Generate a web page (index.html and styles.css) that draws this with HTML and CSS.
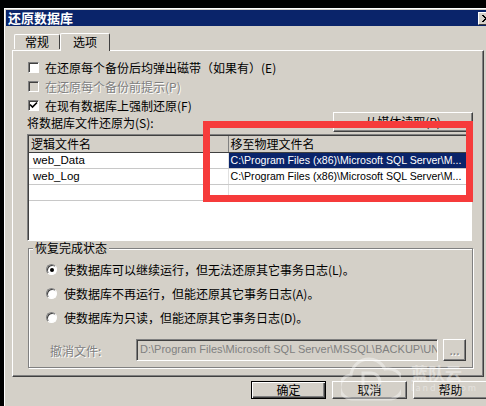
FILE: index.html
```html
<!DOCTYPE html>
<html lang="zh-CN">
<head>
  <meta charset="UTF-8" />
  <title>还原数据库</title>
  <link rel="stylesheet" href="styles.css">
</head>
<body>

<div class="window">
  <!-- title bar -->
  <div class="titlebar">
    <span class="title">还原数据库</span>
    <span class="close">
      <svg width="8" height="7" viewBox="0 0 8 7"><path d="M0 0L7 7M7 0L0 7M1 0L8 7M8 0L1 7" stroke="#000" stroke-width="1"/></svg>
    </span>
  </div>

  <!-- tabs -->
  <div class="tabs">
    <div class="tab">常规</div>
    <div class="tab active">选项</div>
  </div>

  <div class="panel">
    <div class="check"><span class="box"></span>在还原每个备份后均弹出磁带（如果有）(E)</div>
    <div class="check disabled"><span class="box"></span>在还原每个备份前提示(P)</div>
    <div class="check">
      <span class="box"><svg width="9" height="9" viewBox="0 0 9 9"><path d="M1 3.5L3.5 6L8 1.5" fill="none" stroke="#000" stroke-width="1.6"/></svg></span>在现有数据库上强制还原(F)
    </div>

    <div class="files-row">
      <span>将数据库文件还原为(S):</span>
      <button class="btn media">从媒体读取(R)</button>
    </div>

    <div class="grid">
      <table>
        <tr class="head"><th class="c1">逻辑文件名</th><th>移至物理文件名</th></tr>
        <tr><td class="c1">web_Data</td><td class="sel">C:\Program Files (x86)\Microsoft SQL Server\M...</td></tr>
        <tr><td class="c1">web_Log</td><td>C:\Program Files (x86)\Microsoft SQL Server\M...</td></tr>
        <tr><td class="c1">&nbsp;</td><td>&nbsp;</td></tr>
        <tr class="rest"><td class="c1"></td><td></td></tr>
      </table>
    </div>

    <div class="group">
      <span class="legend">恢复完成状态</span>
      <div class="radio"><span class="dot on"></span>使数据库可以继续运行，但无法还原其它事务日志(L)。</div>
      <div class="radio"><span class="dot"></span>使数据库不再运行，但能还原其它事务日志(A)。</div>
      <div class="radio"><span class="dot"></span>使数据库为只读，但能还原其它事务日志(D)。</div>
      <div class="undo-row">
        <span class="undo-label">撤消文件:</span>
        <div class="field">D:\Program Files\Microsoft SQL Server\MSSQL\BACKUP\UN</div>
        <button class="btn dots">...</button>
      </div>
    </div>
  </div>

  <div class="actions">
    <button class="btn default">确定</button>
    <button class="btn">取消</button>
    <button class="btn">帮助</button>
  </div>

  <!-- red highlight drawn on top of the screenshot -->
  <div class="highlight"></div>

  <!-- watermark -->
  <div class="watermark">
    <svg width="60" height="46" viewBox="0 0 60 46">
      <path d="M12 44 A12 12 0 0 1 10 20 A18 18 0 0 1 44 14 A14 14 0 0 1 50 44 Z" fill="none" stroke="rgba(255,255,255,0.4)" stroke-width="3"/>
      <path d="M22 18 V36 H30 A9 9 0 0 0 30 18 Z" fill="none" stroke="rgba(255,255,255,0.4)" stroke-width="3"/>
    </svg>
    <div class="wm-text">
      <span class="wm-name">蓝队云</span>
      <span class="wm-url">landui.com</span>
    </div>
  </div>
</div>

</body>
</html>
```

FILE: styles.css
```css
* { margin: 0; padding: 0; box-sizing: border-box; }

html, body {
  height: 100%;
  background: #000;
  overflow: hidden;
  font-family: "Noto Sans CJK SC", "Liberation Sans", sans-serif;
  font-size: 12px;
  color: #000;
}

body {
  padding: 8px 0 0 4px;
}

.window {
  position: relative;
  width: 492px;
  height: 398px;
  background: #d4d0c8;
  border-top: 1px solid #fff;
  border-left: 1px solid #fff;
  padding: 1px 0 0 1px;
}

/* title bar */
.titlebar {
  display: flex;
  align-items: center;
  height: 16px;
  background: #0a246a;
  color: #fff;
  font-weight: bold;
  font-size: 13px;
  line-height: 16px;
  padding-left: 2px;
}

.close {
  display: flex;
  align-items: center;
  justify-content: center;
  margin-left: auto;
  margin-right: 2px;
  width: 16px;
  height: 13px;
  background: #d4d0c8;
  border: 1px solid;
  border-color: #fff #404040 #404040 #fff;
}

/* tabs */
.tabs {
  display: flex;
  align-items: flex-end;
  height: 18px;
  margin-top: 6px;
  padding-left: 8px;
  position: relative;
  z-index: 1;
}

.tab {
  height: 15px;
  line-height: 14px;
  width: 46px;
  text-align: center;
  border: 1px solid;
  border-color: #fff #404040 transparent #fff;
  border-bottom: none;
  border-radius: 2px 2px 0 0;
  margin-bottom: 1px;
}

.tab.active {
  height: 18px;
  width: 50px;
  margin-bottom: -1px;
  background: #d4d0c8;
  line-height: 15px;
  padding-bottom: 2px;
}

/* tab page */
.panel {
  margin-left: 6px;
  width: 472px;
  height: 327px;
  border: 1px solid;
  border-color: #fff #404040 #404040 #fff;
  box-shadow: inset -1px -1px #808080;
  padding: 7px 0 0 15px;
}

.check {
  display: flex;
  align-items: center;
  height: 19px;
  line-height: 19px;
}

.check.disabled {
  color: #808080;
  text-shadow: 1px 1px #fff;
}

.box {
  display: flex;
  align-items: center;
  justify-content: center;
  width: 11px;
  height: 11px;
  margin-right: 6px;
  background: #fff;
  border: 1px solid;
  border-color: #808080 #fff #fff #808080;
  box-shadow: inset 1px 1px #404040;
}

.check.disabled .box {
  background: #d4d0c8;
}

.files-row {
  display: flex;
  align-items: flex-end;
  justify-content: space-between;
  height: 20px;
  margin-top: -3px;
  margin-left: -1px;
  padding-right: 10px;
}

.files-row span {
  line-height: 14px;
  padding-bottom: 2px;
}

.btn {
  font: inherit;
  color: #000;
  background: #d4d0c8;
  border: 1px solid;
  border-color: #fff #404040 #404040 #fff;
  box-shadow: inset -1px -1px #808080;
  height: 18px;
  line-height: 14px;
}

.media {
  width: 140px;
  height: 20px;
}

/* file list */
.grid {
  margin-top: 2px;
  margin-left: -1px;
  width: 445px;
  height: 107px;
  background: #fff;
  border: 1px solid;
  border-color: #808080 #fff #fff #808080;
  box-shadow: inset 1px 1px #404040;
  padding: 1px 0 0 1px;
  overflow: hidden;
}

.grid table {
  width: 100%;
  height: 100%;
  border-collapse: collapse;
  table-layout: fixed;
}

.grid th {
  height: 16px;
  font-weight: normal;
  text-align: left;
  line-height: 14px;
  padding: 0 2px;
  background: #d4d0c8;
  border-right: 1px solid #808080;
  border-bottom: 1px solid #404040;
}

.grid th.c1 { width: 199px; }

.grid td {
  height: 16px;
  line-height: 15px;
  padding: 0 2px;
  border-bottom: 1px solid #c8c8c8;
  border-right: 1px solid #e0e0e0;
  white-space: nowrap;
  overflow: hidden;
  text-overflow: ellipsis;
  font-family: "Liberation Sans", sans-serif;
  font-size: 10.6px;
}

.grid td.c1 {
  padding-left: 4px;
  font-size: 11.5px;
}

.grid td.sel {
  background: #0a246a;
  color: #fff;
}

.grid tr.rest td {
  height: auto;
  border: none;
}

/* completion state group */
.group {
  position: relative;
  margin-top: 7px;
  width: 445px;
  height: 120px;
  border: 1px solid #808080;
  box-shadow: inset 1px 1px #fff, 1px 1px #fff;
  padding: 8px 0 0 17px;
}

.legend {
  position: absolute;
  top: -8px;
  left: 4px;
  padding: 0 2px;
  background: #d4d0c8;
  line-height: 14px;
}

.radio {
  display: flex;
  align-items: center;
  height: 24px;
}

.dot {
  position: relative;
  width: 11px;
  height: 11px;
  margin-right: 7px;
  border-radius: 50%;
  background: #fff;
  border: 1px solid;
  border-color: #808080 #fff #fff #808080;
  box-shadow: inset 1px 1px #404040;
}

.dot.on::after {
  content: "";
  position: absolute;
  top: 3px;
  left: 3px;
  width: 4px;
  height: 4px;
  border-radius: 50%;
  background: #000;
}

.undo-row {
  display: flex;
  align-items: center;
  margin-top: 10px;
  margin-left: 4px;
  height: 22px;
}

.undo-label {
  width: 86px;
  color: #808080;
  text-shadow: 1px 1px #fff;
}

.field {
  width: 302px;
  height: 22px;
  line-height: 18px;
  padding-left: 3px;
  border: 1px solid;
  border-color: #808080 #fff #fff #808080;
  box-shadow: inset 1px 1px #404040;
  color: #808080;
  font-family: "Liberation Sans", sans-serif;
  font-size: 11px;
  white-space: nowrap;
  overflow: hidden;
}

.dots {
  width: 23px;
  height: 22px;
  margin-left: 5px;
  color: #808080;
  text-shadow: 1px 1px #fff;
}

/* dialog buttons */
.actions {
  display: flex;
  gap: 6px;
  margin-top: 4px;
  padding-left: 245px;
}

.actions .btn {
  width: 75px;
}

.actions .default {
  border: 1px solid #000;
  box-shadow: inset 1px 1px #fff, inset -1px -1px #404040, inset -2px -2px #808080;
}

.highlight {
  position: absolute;
  left: 198px;
  top: 112px;
  width: 270px;
  height: 81px;
  border: 7px solid #f63b3b;
  pointer-events: none;
}

.watermark {
  position: absolute;
  left: 336px;
  top: 346px;
  display: flex;
  align-items: center;
  gap: 10px;
  pointer-events: none;
}

.wm-text {
  display: flex;
  flex-direction: column;
  color: rgba(255, 255, 255, 0.4);
}

.wm-name {
  font-size: 17px;
  font-weight: bold;
  line-height: 20px;
}

.wm-url {
  font-size: 9px;
  letter-spacing: 2px;
  line-height: 10px;
}
```
